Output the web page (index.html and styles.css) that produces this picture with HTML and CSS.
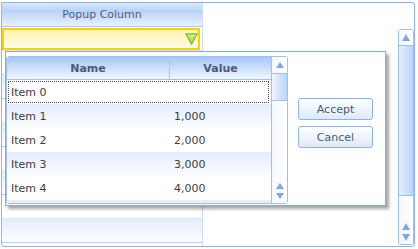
FILE: index.html
```html
<!DOCTYPE html>
<html lang="en">
<head>
    <meta charset="UTF-8">
    <title>Popup Column</title>
    <link rel="stylesheet" href="styles.css">
</head>
<body>
    <div class="grid">
        <div class="grid-body">
            <div class="column">
                <div class="col-header">Popup Column</div>
                <div class="row edit-row">
                    <div class="editor">
                        <svg class="drop" width="13" height="12" viewBox="0 0 13 12">
                            <defs>
                                <linearGradient id="dropFill" x1="0" y1="0" x2="0" y2="1">
                                    <stop offset="0" stop-color="#d3f08e"/>
                                    <stop offset="1" stop-color="#9fd24a"/>
                                </linearGradient>
                            </defs>
                            <path d="M0.8 0.8 H12.2 L6.5 11.2 Z" fill="url(#dropFill)" stroke="#78b82e" stroke-width="1.2" stroke-linejoin="round"/>
                        </svg>
                    </div>
                </div>
                <div class="row"></div>
                <div class="row alt"></div>
                <div class="row"></div>
                <div class="row alt"></div>
                <div class="row"></div>
                <div class="row alt"></div>
                <div class="row"></div>
                <div class="row alt"></div>
            </div>
            <div class="empty"></div>
            <div class="vscroll">
                <div class="sb-btn"><span class="arrow-up"></span></div>
                <div class="sb-thumb"></div>
                <div class="sb-track">
                    <span class="arrow-up"></span>
                    <span class="arrow-down"></span>
                </div>
            </div>
        </div>

        <div class="popup">
            <div class="popup-grid">
                <div class="pg-main">
                    <div class="pg-header">
                        <div class="pg-name">Name</div>
                        <div class="pg-value">Value</div>
                    </div>
                    <div class="pg-row">
                        <div class="pg-focus">Item 0</div>
                    </div>
                    <div class="pg-row alt"><div class="pg-name">Item 1</div><div class="pg-value">1,000</div></div>
                    <div class="pg-row"><div class="pg-name">Item 2</div><div class="pg-value">2,000</div></div>
                    <div class="pg-row alt"><div class="pg-name">Item 3</div><div class="pg-value">3,000</div></div>
                    <div class="pg-row"><div class="pg-name">Item 4</div><div class="pg-value">4,000</div></div>
                    <div class="pg-row alt"></div>
                </div>
                <div class="pg-scroll">
                    <div class="ps-btn"><span class="arrow-up small"></span></div>
                    <div class="ps-thumb"></div>
                    <div class="ps-track">
                        <span class="arrow-up small"></span>
                        <span class="arrow-down small"></span>
                    </div>
                </div>
            </div>
            <div class="popup-buttons">
                <button class="btn">Accept</button>
                <button class="btn">Cancel</button>
            </div>
        </div>
    </div>
</body>
</html>
```

FILE: styles.css
```css
* { box-sizing: border-box; }
body { margin: 0; font-family: "DejaVu Sans", sans-serif; font-size: 11px; background: #fff; color: #3c3c3c; }

.grid { position: relative; margin: 2px 0 0 1px; width: 414px; height: 245px; border: 1px solid #8db4f2; border-radius: 0 3px 3px 3px; overflow: hidden; background: #fff; }
.grid-body { display: flex; height: 100%; }

.column { width: 201px; border-right: 1px solid #c9dbf6; }
.col-header { height: 24px; border-bottom: 1px solid #a9c8f3; display: flex; align-items: center; justify-content: center; color: #4d5e7d; background: linear-gradient(#dce9fb 0%, #b7d2f8 35%, #eaf2fd 100%); }
.row { height: 24px; border-bottom: 1px solid #dbe7f8; }
.row.alt { background: linear-gradient(#e4eefc, #fbfdff); border-bottom-color: #b7d0f4; }
.edit-row { padding-top: 1px; }
.editor { width: 198px; height: 22px; border: 2px solid #f6d200; background: linear-gradient(#fff3b0, #fffbe4); display: flex; align-items: center; justify-content: flex-end; }
.drop { margin-right: 0; }

.empty { flex: 1; }

.vscroll { width: 16px; margin: 26px 0 1px 0; border: 1px solid #9dbff1; border-radius: 3px; display: flex; flex-direction: column; background: linear-gradient(to right, #f4f8fe, #fff); }
.sb-btn { height: 16px; border-bottom: 1px solid #9dbff1; display: flex; align-items: center; justify-content: center; background: linear-gradient(to right, #f3f8ff, #fff); }
.sb-thumb { height: 150px; border-bottom: 1px solid #9dbff1; background: linear-gradient(to right, #e6effd, #b9d3f9); }
.sb-track { flex: 1; display: flex; flex-direction: column; align-items: center; justify-content: flex-end; gap: 4px; padding-bottom: 3px; }

.arrow-up { width: 0; height: 0; border-left: 4px solid transparent; border-right: 4px solid transparent; border-bottom: 7px solid #7ea6ea; }
.arrow-down { width: 0; height: 0; border-left: 4px solid transparent; border-right: 4px solid transparent; border-top: 7px solid #7ea6ea; }
.arrow-up.small { border-left-width: 4px; border-right-width: 4px; border-bottom-width: 6px; }
.arrow-down.small { border-left-width: 4px; border-right-width: 4px; border-top-width: 6px; }

.popup { position: absolute; left: 3px; top: 48px; width: 381px; height: 155px; border: 1px solid #86acdf; background: #fff; box-shadow: 3px 3px 3px rgba(0, 0, 0, 0.35); display: flex; padding-top: 4px; }
.popup-grid { width: 282px; height: 148px; border: 1px solid #9ec0f3; border-radius: 3px; display: flex; overflow: hidden; }
.pg-main { flex: 1; }
.pg-header { height: 23px; border-bottom: 1px solid #9ec0f3; display: flex; background: linear-gradient(#a6c7f7, #f2f7fe); color: #4a5a78; font-weight: bold; }
.pg-header .pg-name { border-right: 1px solid #a8c8f2; justify-content: center; padding: 0; }
.pg-header .pg-value { justify-content: center; padding: 0; }
.pg-row { height: 24px; display: flex; }
.pg-row.alt { background: linear-gradient(#e3edfc, #fbfdff); }
.pg-name { width: 163px; display: flex; align-items: center; padding-left: 4px; }
.pg-value { flex: 1; display: flex; align-items: center; padding-left: 4px; }
.pg-focus { margin: 1px 2px 1px 1px; flex: 1; border: 1px dotted #555; display: flex; align-items: center; padding-left: 2px; }

.pg-scroll { width: 16px; border-left: 1px solid #9ec0f3; display: flex; flex-direction: column; background: #fff; }
.ps-btn { height: 17px; border-bottom: 1px solid #9ec0f3; display: flex; align-items: center; justify-content: center; background: linear-gradient(to right, #f3f8ff, #fff); }
.ps-thumb { height: 27px; border-bottom: 1px solid #9ec0f3; background: linear-gradient(to right, #eef5fe, #b9d3f9); }
.ps-track { flex: 1; display: flex; flex-direction: column; align-items: center; justify-content: flex-end; gap: 4px; padding-bottom: 4px; background: linear-gradient(to right, #f4f8fe, #fff); }

.popup-buttons { display: flex; flex-direction: column; gap: 6px; margin: 42px 0 0 10px; }
.btn { width: 75px; height: 22px; border: 1px solid #8cb3ee; border-radius: 3px; background: linear-gradient(#ffffff, #dde9fc); color: #4d5a70; font-family: "DejaVu Sans", sans-serif; font-size: 11px; padding: 0; }
```
